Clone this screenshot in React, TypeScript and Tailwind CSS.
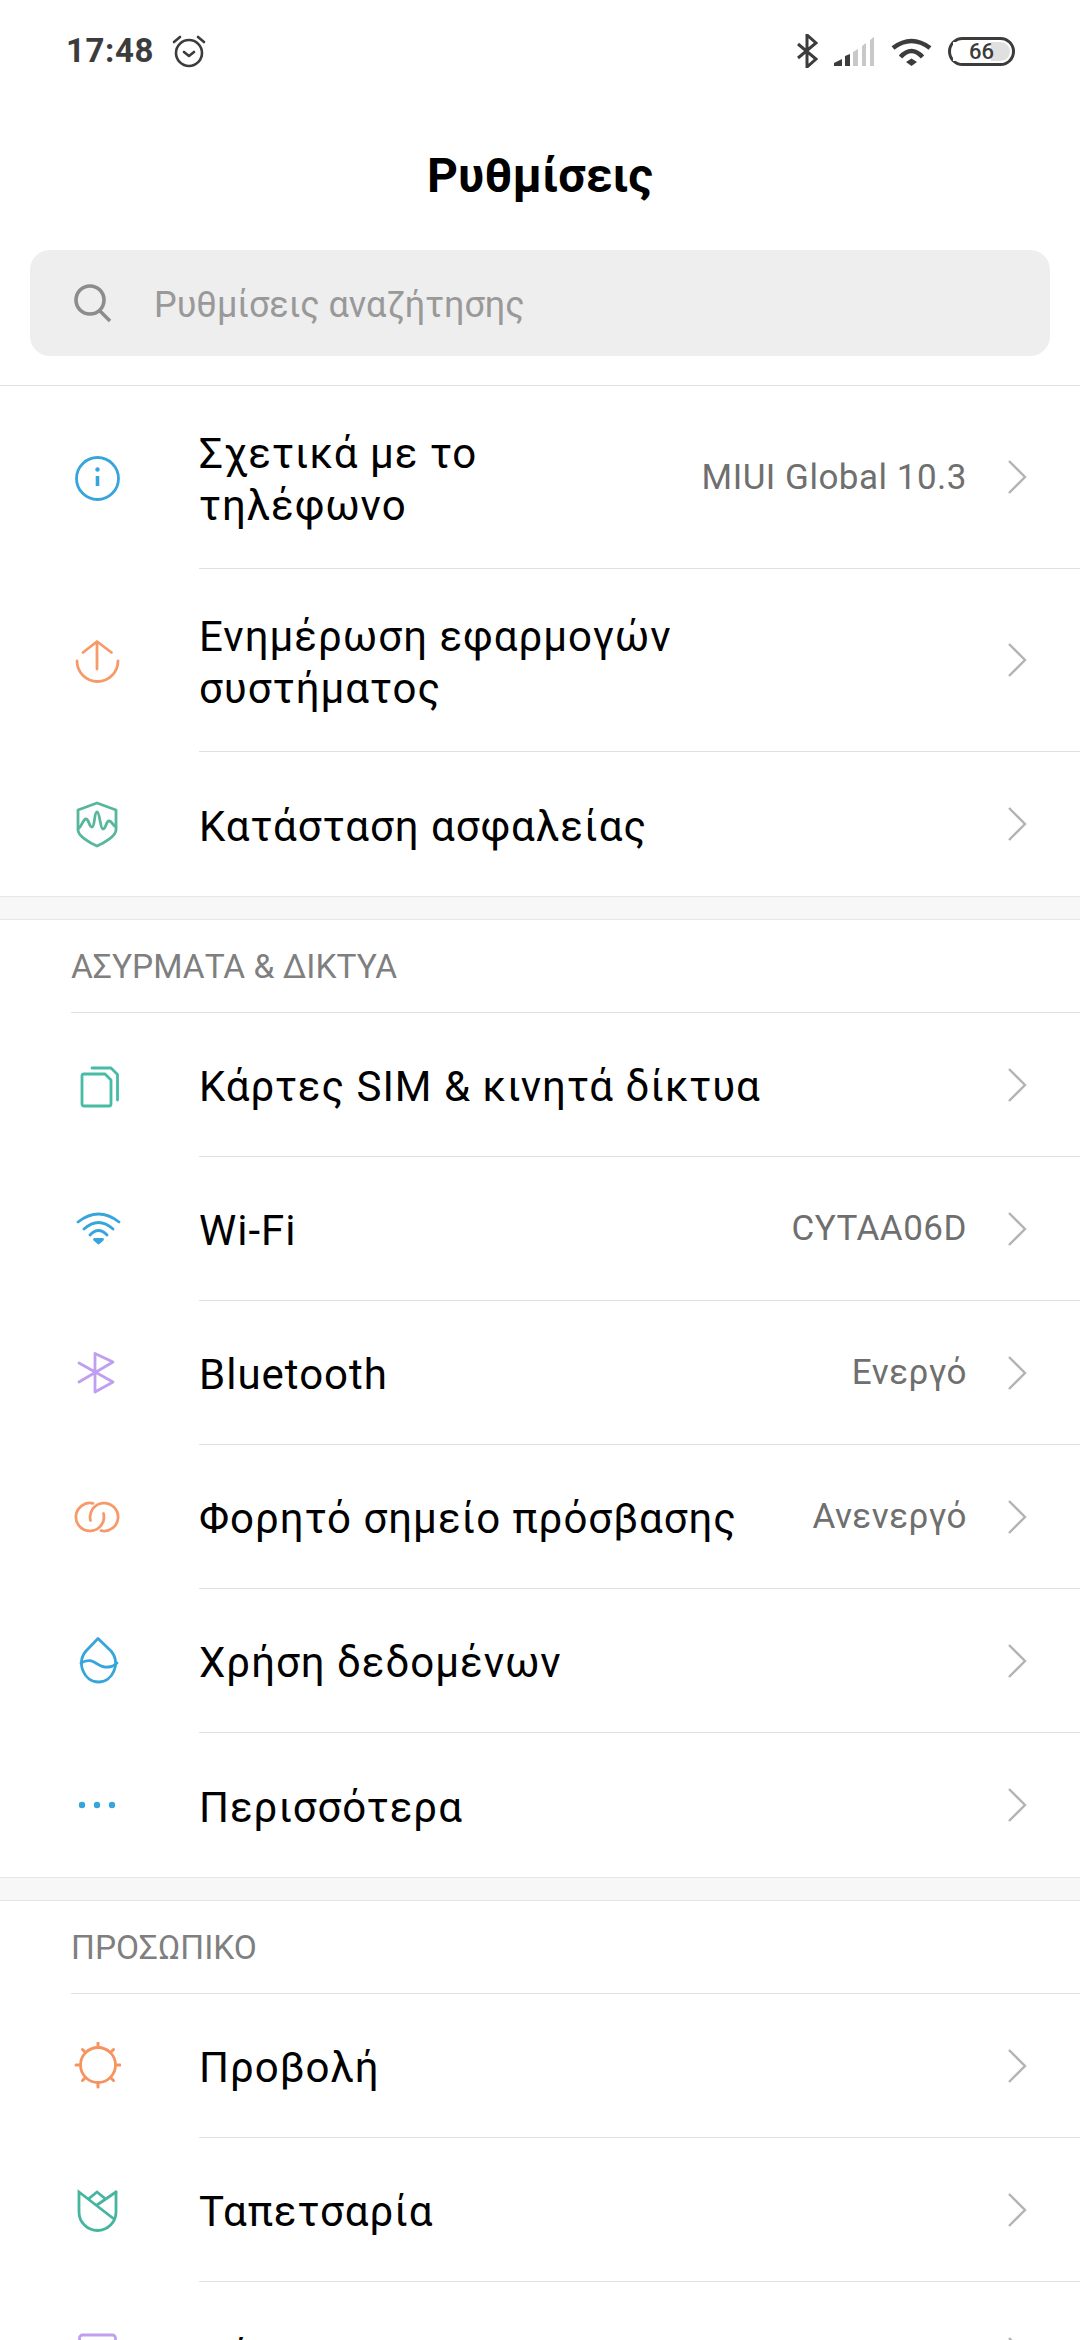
import type { ReactNode } from 'react';

const chevron = (
    <svg width="20" height="34" viewBox="0 0 20 34" fill="none" stroke="#b3b3b3" strokeWidth="2.4">
        <path d="M2 1l16 16L2 33" />
    </svg>
);

function Icon({ children, color }: { children: ReactNode; color: string }) {
    return (
        <svg width="48" height="48" viewBox="0 0 48 48" fill="none" stroke={color} strokeWidth="2.8" strokeLinecap="round" strokeLinejoin="round">
            {children}
        </svg>
    );
}

const icons: Record<string, ReactNode> = {
    info: (
        <Icon color="#36a5dc">
            <circle cx="24.5" cy="24.5" r="21" />
            <path d="M24.5 22v10" strokeWidth="3.6" strokeLinecap="butt" />
            <circle cx="24.5" cy="15.5" r="2.2" fill="#36a5dc" stroke="none" />
        </Icon>
    ),
    update: (
        <Icon color="#f79a6a">
            <path d="M4 24a20.5 20.5 0 0 0 41 0" />
            <path d="M24 32V5M10 15.5L24 4.5l14.5 11" />
        </Icon>
    ),
    shield: (
        <Icon color="#56b79c">
            <path d="M24 3l19 7v20c0 6-12 13-19 16C17 43 5 36 5 30V10z" />
            <path d="M6 28c3-2 4-9 7-9s3 8 6 8 2-15 5-15 3 17 6 17 3-8 6-8 4 5 7 6" />
        </Icon>
    ),
    sim: (
        <Icon color="#46bba5">
            <path d="M11 13h21l6 6v24a2 2 0 0 1-2 2H11a2 2 0 0 1-2-2V15a2 2 0 0 1 2-2z" />
            <path d="M19 7h19l6.5 6.5V39" />
        </Icon>
    ),
    wifi: (
        <Icon color="#36a5dc">
            <path d="M5 17Q25.5 1 46 17M11 24Q25.5 11 40 24M17 30Q25.5 21 34 30" />
            <path d="M21.5 34.5h8l-4 3.5z" fill="#36a5dc" />
        </Icon>
    ),
    bluetooth: (
        <Icon color="#c09ef0">
            <path d="M6 14l34 19-18 10V4.5L40 13 6 33" />
        </Icon>
    ),
    hotspot: (
        <Icon color="#f79a6a">
            <path d="M20 10.3A14 14 0 1 0 30.5 20.5" />
            <path d="M28 37.7A14 14 0 1 0 17.5 27.5" />
        </Icon>
    ),
    data: (
        <Icon color="#36a5dc">
            <path d="M25 1.5L13 14C3 26 11 45 25.5 45S48 26 38 14z" />
            <path d="M8 26c5-3 9-3 13-1s8 6 14 5c4 0 7-2 9-4" />
        </Icon>
    ),
    more: (
        <Icon color="#36a5dc">
            <circle cx="9" cy="24" r="3.2" fill="#36a5dc" stroke="none" />
            <circle cx="24" cy="24" r="3.2" fill="#36a5dc" stroke="none" />
            <circle cx="39" cy="24" r="3.2" fill="#36a5dc" stroke="none" />
        </Icon>
    ),
    display: (
        <Icon color="#f7935f">
            <circle cx="25" cy="23" r="17.5" />
            <path d="M25 1v4M25 41v4M3 23h4M43 23h4M9.5 7.5l3 3M37.5 35.5l3 3M40.5 7.5l-3 3M12.5 35.5l-3 3" strokeWidth="3" />
        </Icon>
    ),
    wallpaper: (
        <Icon color="#46b5a0">
            <path d="M43 6v20a18.5 18.5 0 0 1-37 0V6l35 27" strokeLinejoin="miter" />
            <path d="M43 6L24 19M16 12.5L24 6l8 6.5" strokeLinejoin="miter" />
        </Icon>
    ),
    theme: (
        <Icon color="#c09ef0">
            <rect x="6.5" y="5" width="36" height="38" rx="3" />
        </Icon>
    ),
};

function Row({ icon, title, value, lines, last }: { icon: string; title: ReactNode; value?: string; lines?: boolean; last?: boolean }) {
    return (
        <div className={`flex items-stretch ${lines ? 'h-[183px]' : 'h-[144px]'}`}>
            <div className="w-[199px] shrink-0 flex items-center pl-[73px]">{icons[icon]}</div>
            <div className={`flex-1 flex items-center pr-[53px] ${last ? '' : 'border-b-[1.5px] border-[#e0e0e0]'}`}>
                <span className="text-[42px] leading-[52px] tracking-[1px] text-black pt-[5px] whitespace-pre-line">{title}</span>
                <span className="ml-auto text-[35px] text-[#6f6f6f] tracking-[0.5px] mr-[40px] pt-[2px]">{value}</span>
                {chevron}
            </div>
        </div>
    );
}

function Gap() {
    return <div className="h-[24px] bg-[#f7f7f7] border-y-[1.5px] border-[#e6e6e6]" />;
}

function Header({ text }: { text: string }) {
    return (
        <div className="ml-[71px] h-[93px] border-b-[1.5px] border-[#e0e0e0] flex items-center text-[33.5px] text-[#7f7f7f] pt-[2px]">
            {text}
        </div>
    );
}

function StatusBar() {
    return (
        <div className="h-[102px] flex items-center pl-[66px] pr-[65px] text-[#3c3c3c]">
            <span className="text-[33px] font-bold tracking-[0.6px]">17:48</span>
            <svg className="ml-[17px]" width="36" height="36" viewBox="0 0 36 36" fill="none" stroke="#3c3c3c" strokeWidth="2.6" strokeLinecap="round" strokeLinejoin="round">
                <circle cx="18" cy="20" r="13" />
                <path d="M13 19l5 4 5-4M3 9l6-5M33 9l-6-5" />
            </svg>
            <div className="ml-auto flex items-center">
                <svg width="21" height="34" viewBox="0 0 21 34" fill="none" stroke="#3c3c3c" strokeWidth="3">
                    <path d="M1 10l18 15-9 8V1l9 8L1 24" />
                </svg>
                <svg className="ml-[16px]" width="40" height="29" viewBox="0 0 40 29">
                    <path d="M0 29v-3l8-4v7zM11 29V19l5-2v12z" fill="#3c3c3c" />
                    <path d="M19 29V15l5-3v17zM28 29V9l4-3v23zM36 29V3l4-3v29z" fill="#c8c8c8" />
                </svg>
                <svg className="ml-[17px]" width="41" height="29" viewBox="0 0 41 29" fill="none" stroke="#3c3c3c" strokeWidth="4.6">
                    <path d="M2 11Q20.5-3 39 11M9.5 20Q20.5 8 31.5 20" />
                    <path d="M15 25l5.5-3.5L26 25l-5.5 4z" fill="#3c3c3c" stroke="none" />
                </svg>
                <div className="ml-[16px] relative w-[67px] h-[29px] rounded-full border-[3px] border-[#3c3c3c] p-[2px] flex">
                    <div className="w-[66%] bg-white" />
                    <div className="flex-1 rounded-r-full bg-[#e0e0e0]" />
                    <span className="absolute inset-0 flex items-center justify-center text-[22px] font-medium">66</span>
                </div>
            </div>
        </div>
    );
}

export default function App() {
    return (
        <div className="w-[1080px] h-[2340px] overflow-hidden bg-white font-['Roboto',sans-serif]">
            <StatusBar />
            <div className="h-[148px] flex items-center justify-center text-[48px] font-bold text-black">Ρυθμίσεις</div>
            <div className="mx-[30px] h-[106px] rounded-[20px] bg-[#eeeeee] flex items-center pl-[43px]">
                <svg width="40" height="40" viewBox="0 0 40 40" fill="none" stroke="#8c8c8c" strokeWidth="3.6">
                    <circle cx="17" cy="17" r="14" />
                    <path d="M26 27l11 11" />
                </svg>
                <span className="ml-[41px] text-[36px] text-[#999999] pt-[3px]">Ρυθμίσεις αναζήτησης</span>
            </div>
            <div className="mt-[29px] border-t-[1.5px] border-[#e0e0e0]">
                <Row icon="info" title={'Σχετικά με το\nτηλέφωνο'} value="MIUI Global 10.3" lines />
                <Row icon="update" title={'Ενημέρωση εφαρμογών\nσυστήματος'} lines />
                <Row icon="shield" title="Κατάσταση ασφαλείας" last />
            </div>
            <Gap />
            <Header text="ΑΣΥΡΜΑΤΑ & ΔΙΚΤΥΑ" />
            <Row icon="sim" title="Κάρτες SIM & κινητά δίκτυα" />
            <Row icon="wifi" title="Wi-Fi" value="CYTAA06D" />
            <Row icon="bluetooth" title="Bluetooth" value="Ενεργό" />
            <Row icon="hotspot" title="Φορητό σημείο πρόσβασης" value="Ανενεργό" />
            <Row icon="data" title="Χρήση δεδομένων" />
            <Row icon="more" title="Περισσότερα" last />
            <Gap />
            <Header text="ΠΡΟΣΩΠΙΚΟ" />
            <Row icon="display" title="Προβολή" />
            <Row icon="wallpaper" title="Ταπετσαρία" />
            <Row icon="theme" title="Θέματα" last />
        </div>
    );
}
